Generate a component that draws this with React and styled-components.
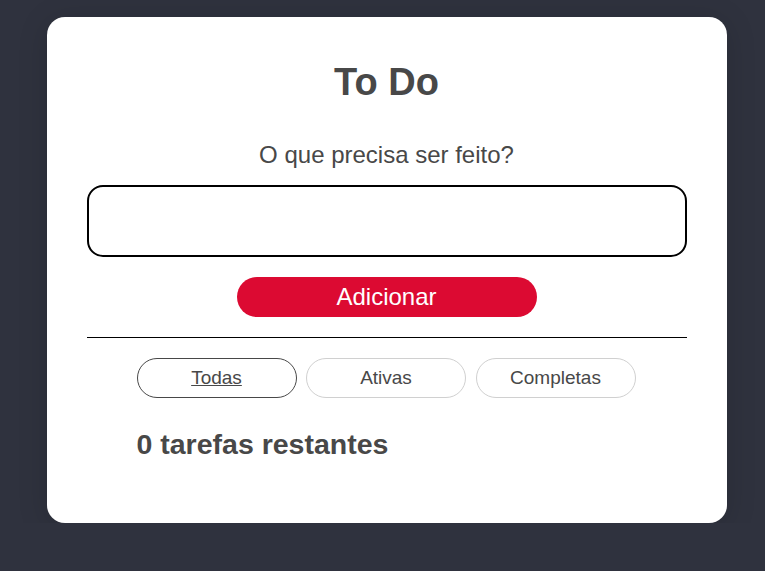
import React, { useState } from "react";
import styled, { createGlobalStyle } from "styled-components";

const GlobalStyle = createGlobalStyle`
  body {
    margin: 0;
    background: #2f323e;
    font-family: "Liberation Sans", Arial, sans-serif;
    color: #484848;
  }
`;

const Page = styled.div`
  display: flex;
  justify-content: center;
  align-items: flex-start;
  padding: 17px 0 0 8px;
`;

const Card = styled.div`
  width: 680px;
  box-sizing: border-box;
  background: #fff;
  border-radius: 18px;
  padding: 40px 40px 63px;
  box-shadow: 0 4px 30px rgba(0, 0, 0, 0.15);
  display: flex;
  flex-direction: column;
  align-items: center;
`;

const Title = styled.h1`
  margin: 0 0 34px;
  font-size: 38px;
  font-weight: bold;
  line-height: 50px;
`;

const Label = styled.label`
  font-size: 24px;
  line-height: 28px;
  margin-bottom: 16px;
`;

const Input = styled.input`
  width: 100%;
  height: 72px;
  box-sizing: border-box;
  border: 2px solid #000;
  border-radius: 16px;
  font-size: 22px;
  padding: 0 16px;
  font-family: inherit;
  outline: none;
`;

const AddButton = styled.button`
  margin-top: 20px;
  width: 300px;
  height: 40px;
  border: none;
  border-radius: 20px;
  background: #dc0a32;
  color: #fff;
  font-size: 24px;
  font-family: inherit;
  cursor: pointer;
`;

const Divider = styled.hr`
  width: 100%;
  margin: 20px 0 20px;
  border: none;
  border-top: 1px solid #000;
`;

const Section = styled.div`
  width: 500px;
  display: flex;
  flex-direction: column;
`;

const Filters = styled.div`
  display: flex;
  gap: 9.5px;
`;

const FilterButton = styled.button`
  width: 160px;
  height: 40px;
  background: #fff;
  border: 1px solid ${(p) => (p.$active ? "#484848" : "#d0d0d0")};
  border-radius: 20px;
  color: #484848;
  font-size: 19px;
  font-family: inherit;
  text-decoration: ${(p) => (p.$active ? "underline" : "none")};
  cursor: pointer;
`;

const Remaining = styled.h2`
  margin: 30px 0 0;
  font-size: 28.5px;
  font-weight: bold;
  line-height: 32px;
`;

export default function App() {
  const [filter, setFilter] = useState("Todas");
  const filters = ["Todas", "Ativas", "Completas"];

  return (
    <>
      <GlobalStyle />
      <Page>
        <Card>
          <Title>To Do</Title>
          <Label htmlFor="new-todo">O que precisa ser feito?</Label>
          <Input id="new-todo" type="text" />
          <AddButton>Adicionar</AddButton>
          <Divider />
          <Section>
            <Filters>
              {filters.map((f) => (
                <FilterButton
                  key={f}
                  $active={filter === f}
                  onClick={() => setFilter(f)}
                >
                  {f}
                </FilterButton>
              ))}
            </Filters>
            <Remaining>0 tarefas restantes</Remaining>
          </Section>
        </Card>
      </Page>
    </>
  );
}
